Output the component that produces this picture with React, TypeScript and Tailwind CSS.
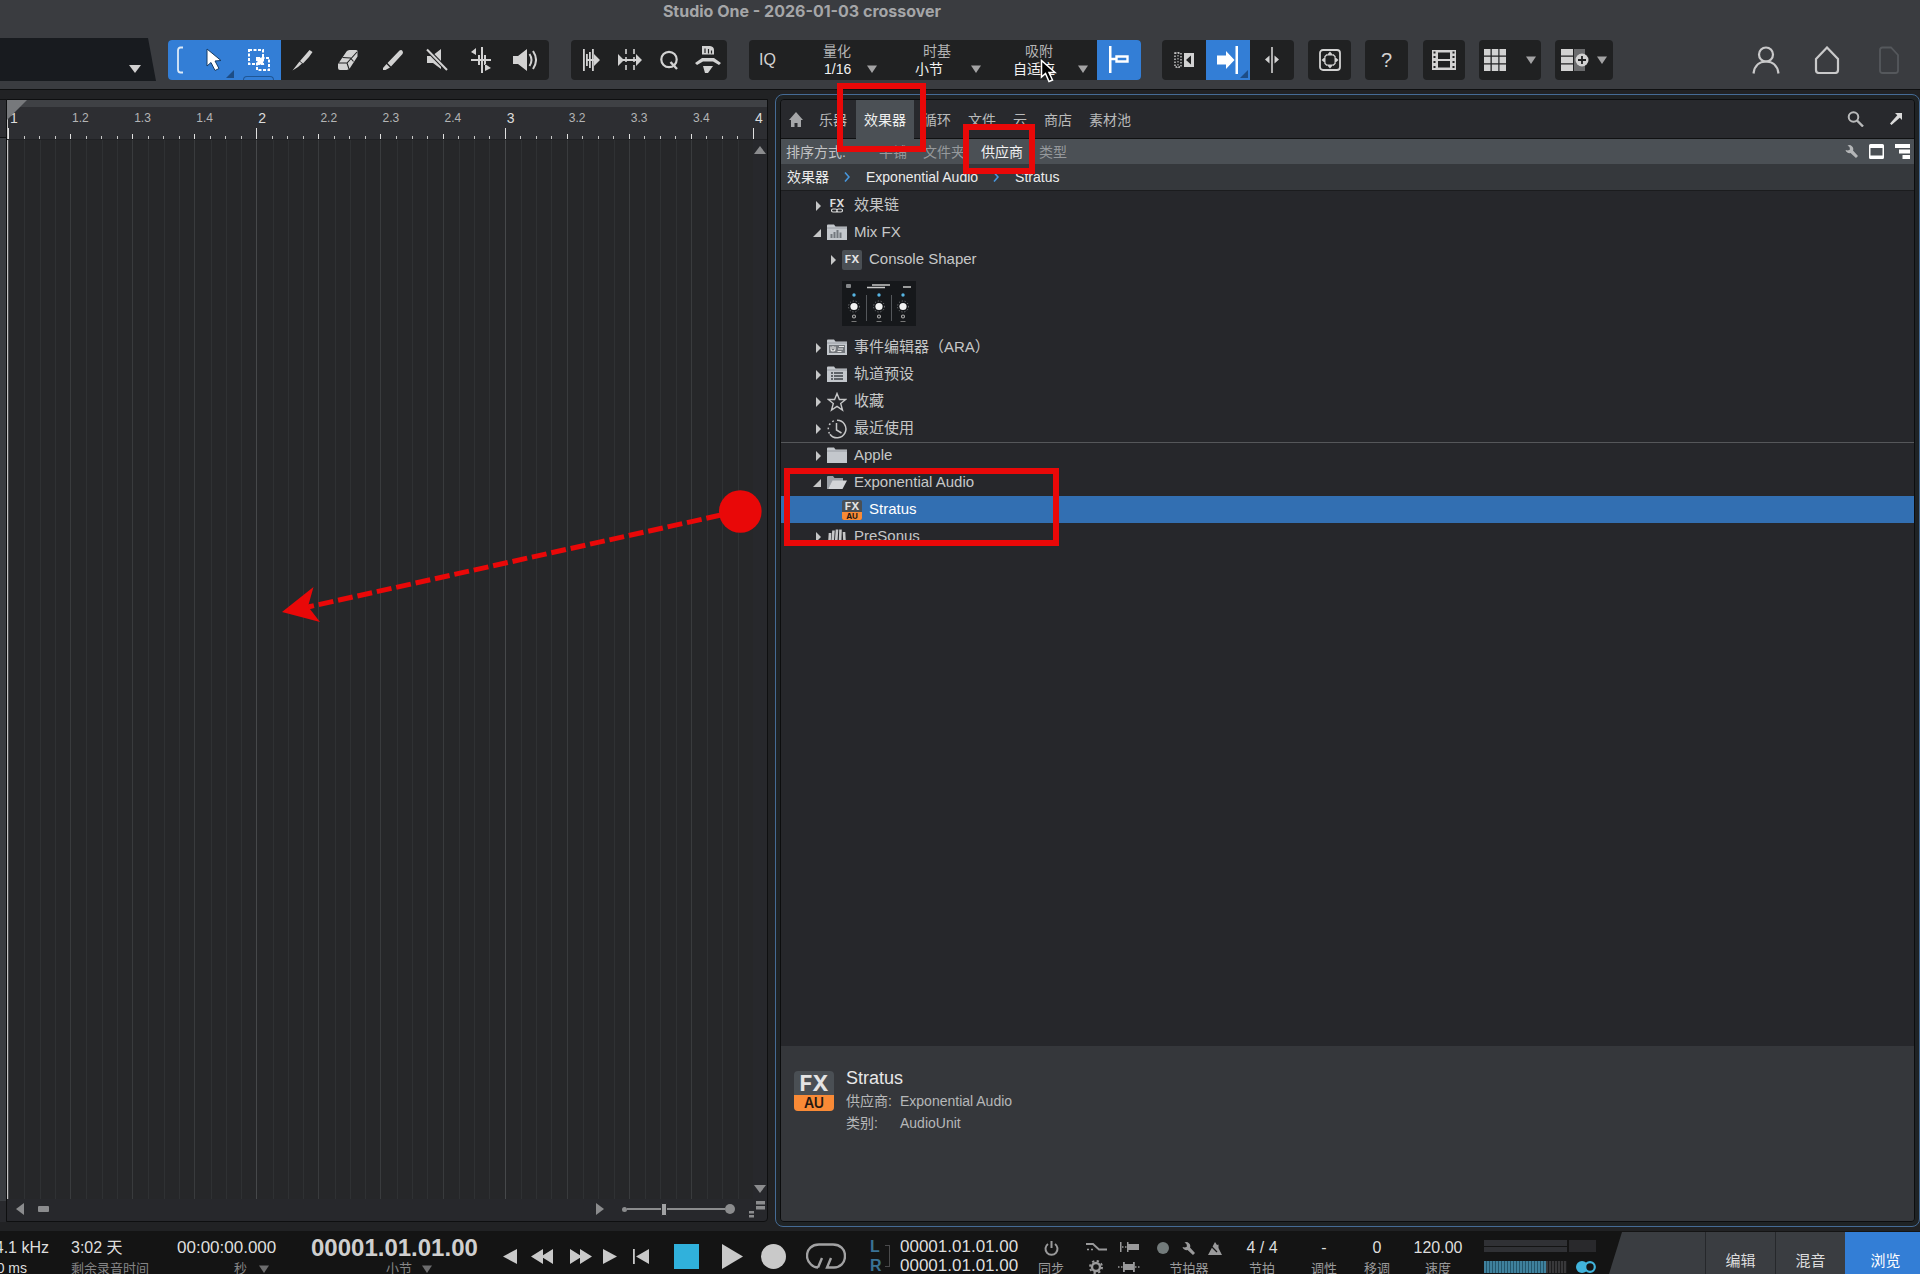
import React from "react";

type P = { className?: string; children?: React.ReactNode };

const Svg = ({ w, h, children, className = "" }: P & { w: number; h: number }) => (
  <svg width={w} height={h} viewBox={`0 0 ${w} ${h}`} className={`shrink-0 ${className}`} fill="currentColor" aria-hidden="true">
    {children}
  </svg>
);

const Down = ({ className = "text-[#a3a3a4]" }: P) => (
  <Svg w={10} h={8} className={className}>
    <path d="M0 0.5h10L5 8z" />
  </Svg>
);

const Group = ({ children, className = "" }: P) => (
  <div className={`flex h-10 shrink-0 overflow-hidden rounded bg-[#202122] text-[#d2d2d2] ${className}`}>{children}</div>
);

const Tool = ({ label, className = "w-11", children }: P & { label: string }) => (
  <button type="button" aria-label={label} className={`relative flex h-10 shrink-0 items-center justify-center ${className}`}>
    {children}
  </button>
);

const Corner = () => (
  <Svg w={8} h={8} className="absolute right-0.5 bottom-0.5 text-[#1d4d86]">
    <path d="M8 0v8H0z" />
  </Svg>
);

function Snap({ label, value, cell, labelPad, selectPad, arrow }: { label: string; value: string; cell: string; labelPad: string; selectPad: string; arrow: string }) {
  return (
    <label className={`relative block h-10 shrink-0 text-sm leading-[18px] ${cell}`}>
      <span className={`block pt-0.5 text-[#b4b4b5] ${labelPad}`}>{label}</span>
      <select defaultValue={value} className={`block h-[18px] w-full appearance-none bg-transparent text-[#f2f2f2] ${selectPad}`}>
        <option>{value}</option>
      </select>
      <Down className={`absolute bottom-[7px] ${arrow} text-[#a3a3a4]`} />
    </label>
  );
}

function Toolbar() {
  return (
    <div className="flex h-[59px] items-start pt-[10px]">
      <button type="button" aria-label="Parameter" className="relative -mt-[2px] h-[43px] w-[156px] shrink-0 bg-[#181b1f] [clip-path:polygon(0_0,148px_0,156px_100%,0_100%)]">
        <Svg w={12} h={8} className="absolute right-[15px] bottom-2 text-[#d0d0d0]">
          <path d="M0 0h12L6 8z" />
        </Svg>
      </button>

      <Group className="ml-3 pr-0.5">
        <div className="flex bg-[#337ed6] text-white">
          <span className="flex w-[23px] items-center justify-center">
            <Svg w={8} h={28} className="text-[#dceaf8]">
              <path d="M7 1.5H4.5Q2 1.500 2 4.500V23.500Q2 26.500 4.500 26.500H7" fill="none" stroke="currentColor" strokeWidth="1.800" />
            </Svg>
          </span>
          <Tool label="箭头工具" className="w-[45px]">
            <Svg w={16} h={24}>
              <path d="M1 1v17l4-3.500 4 8 4-2-4-7.500 6-.5z" stroke="#173c66" strokeWidth="1" />
            </Svg>
            <Corner />
          </Tool>
          <Tool label="范围工具" className="w-[45px]">
            <Svg w={24} h={24}>
              <rect x="2" y="2" width="14" height="14" fill="none" stroke="#fff" strokeWidth="2" strokeDasharray="3 1.500" />
              <rect x="10" y="10" width="12" height="12" fill="none" stroke="#fff" strokeWidth="2" strokeDasharray="3 1.500" />
              <path d="M9 9l3 1.500 2-1 2 2v3l1.500 2-3-.5-2 1-3-.5 1-3z" />
            </Svg>
            <span className="absolute bottom-0 h-1 w-[31px] rounded-t border border-b-0 border-[#1f5796]" />
          </Tool>
        </div>
        <Tool label="分割工具">
          <Svg w={24} h={24}>
            <path d="M15.500 5.500L18.500 2l3 2-3.500 5-6 6.500-3-2.500zM8.500 13.500l2.500 2L7 19l-5.500 3.500z" />
          </Svg>
        </Tool>
        <Tool label="橡皮工具" className="w-[45px]">
          <Svg w={24} h={24}>
            <path d="M10.500 3.500Q11.500 2 13.500 2h6.500q2 0 1.500 2v4.500L14 20q-1.500 2-3.500 2H4Q2 22 2 20v-4z" />
            <path d="M2.500 15h8.500L21 4M11 15l2 6M6.500 9.500l8 .5 3 3.500" fill="none" stroke="#202122" strokeWidth="1.100" />
          </Svg>
        </Tool>
        <Tool label="绘制工具" className="w-[45px]">
          <Svg w={24} h={24}>
            <path d="M18.500 2.500q2-1 3 .5t0 3L10 18.500 6.500 15zM5.500 16l3.500 3.500L4.500 22H2v-2z" />
          </Svg>
        </Tool>
        <Tool label="静音工具">
          <Svg w={24} h={24}>
            <path d="M2 8h5l9-7v20l-8-6H2z" />
            <path d="M2 1.500L22 22" stroke="#202122" strokeWidth="4" />
            <path d="M2 1.500L22 22" stroke="currentColor" strokeWidth="2" />
          </Svg>
        </Tool>
        <Tool label="弯曲工具">
          <Svg w={24} h={26}>
            <path d="M12 0h2v26h-2zM9 8h2v10H9zM15 8h2v10h-2zM2 12h20v2H2zM2 5l5-4v7zM22 21l-6-4v7z" />
          </Svg>
        </Tool>
        <Tool label="聆听工具">
          <Svg w={24} h={24}>
            <path d="M0 8h5l9-7v22l-9-7H0z" />
            <path d="M16.500 6q4 6 0 12M20 3q6 9 0 18" fill="none" stroke="currentColor" strokeWidth="2" />
          </Svg>
        </Tool>
      </Group>

      <Group className="ml-[22px]">
        <Tool label="瞬态检测" className="w-[39px]">
          <Svg w={18} h={24}>
            <path d="M1 1h1.800v22H1zM4 6h1.800v12H4zM7 4h1.800v16H7zM10 1h1.800v22H10zM4 11h10v2H4zM12 6l6 6-6 6z" />
          </Svg>
        </Tool>
        <Tool label="拉伸" className="w-[39px]">
          <Svg w={24} h={24}>
            <path d="M0 6l6 6-6 6zM18 6l6 6-6 6zM5 11h14v2H5z" />
            <path d="M8 1v22M16 1v22" stroke="currentColor" strokeWidth="1.600" strokeDasharray="5 3" />
          </Svg>
        </Tool>
        <Tool label="量化" className="w-[39px]">
          <Svg w={20} h={22}>
            <circle cx="10" cy="10.500" r="7.700" fill="none" stroke="currentColor" strokeWidth="2.200" />
            <path d="M11.500 13l6.500 7" stroke="currentColor" strokeWidth="2.400" />
          </Svg>
        </Tool>
        <Tool label="动作" className="w-[39px]">
          <Svg w={28} h={30}>
            <path d="M8 1h2v8.500H8zM8 1h8q4 .5 4 4v4.500H8z" />
            <path d="M11 3.500v4.500M14.500 4v4.500M17.500 5.500v3" stroke="#202122" strokeWidth="1.200" />
            <path d="M1 18L8 13h12l7 5-2 2-6-3.500H9L3 20z" />
            <path d="M9 21h10l-5 7h-3z" />
          </Svg>
        </Tool>
      </Group>

      <Group className="ml-[22px]">
        <button type="button" className="w-[50px] pl-2.5 text-left text-base">IQ</button>
        <Snap label="量化" value="1/16" cell="w-[92px]" labelPad="pl-6" selectPad="pl-[25px]" arrow="left-[68px]" />
        <Snap label="时基" value="小节" cell="w-[98px]" labelPad="pl-8" selectPad="pl-6" arrow="left-[80px]" />
        <Snap label="吸附" value="自适应" cell="w-[108px]" labelPad="pl-9" selectPad="pl-6" arrow="left-[89px]" />
        <Tool label="吸附" className="w-11 bg-[#337ed6]">
          <Svg w={22} h={28} className="text-white">
            <path d="M1 0h2.500v27H1z" />
            <path d="M3 13h5M8.500 10.500h11v5h-11z" fill="none" stroke="currentColor" strokeWidth="2.400" />
          </Svg>
        </Tool>
      </Group>

      <Group className="ml-[21px]">
        <Tool label="自动滚动">
          <Svg w={20} h={16}>
            <path d="M1 1h6v14H1z" fill="none" stroke="currentColor" strokeWidth="1.400" strokeDasharray="1.500 1.500" />
            <path d="M4 0v16" stroke="currentColor" strokeDasharray="1.500 1.500" />
            <path d="M10 1h10v14H10z" />
            <path d="M17 3.500v9L12 8z" fill="#202122" />
          </Svg>
        </Tool>
        <Tool label="光标跟随" className="w-11 bg-[#337ed6]">
          <Svg w={24} h={28} className="text-white">
            <path d="M1 9.500h9V5l8.500 9-8.500 9v-4.500H1z" />
            <path d="M19.500 0H22v28h-2.500z" />
          </Svg>
          <Corner />
        </Tool>
        <Tool label="居中">
          <Svg w={16} h={26}>
            <path d="M7.200 0h1.600v26H7.200zM5.500 8.500v8L1 12.500zM10.500 8.500v8l4.500-4z" />
          </Svg>
        </Tool>
      </Group>

      <Group className="ml-3.5">
        <Tool label="缩放" className="w-[43px]">
          <Svg w={22} h={22}>
            <rect x="1" y="1" width="20" height="20" rx="3" fill="none" stroke="currentColor" strokeWidth="1.800" />
            <path d="M11 2.500l3.500 4h-7zM11 19.500l-3.500-4h7zM2.500 11l4-3.500v7zM19.500 11l-4 3.500v-7z" />
            <path d="M8 5.500L5.500 8M14 5.500L16.500 8M8 16.500L5.500 14M14 16.500l2.500-2.500" stroke="currentColor" strokeWidth="1.200" />
          </Svg>
        </Tool>
      </Group>
      <Group className="ml-3.5">
        <button type="button" className="w-[43px] text-xl">?</button>
      </Group>
      <Group className="ml-[15px]">
        <Tool label="视频" className="w-[42px]">
          <Svg w={24} h={20}>
            <path d="M0 0h24v20H0z" />
            <path d="M6 2.500h12v6.500H6zM6 11h12v6.500H6zM1.500 1.500h2v2h-2zM1.500 6h2v2h-2zM1.500 11h2v2h-2zM1.500 16h2v2h-2zM20.500 1.500h2v2h-2zM20.500 6h2v2h-2zM20.500 11h2v2h-2zM20.500 16h2v2h-2z" fill="#202122" />
          </Svg>
        </Tool>
      </Group>
      <Group className="ml-3.5">
        <Tool label="视图" className="w-[62px]">
          <Svg w={22} h={22}>
            <path d="M0 0h6.500v6.500H0zM7.800 0h6.500v6.500H7.800zM15.500 0H22v6.500h-6.500zM0 7.800h6.500v6.500H0zM7.800 7.800h6.500v6.500H7.800zM15.500 7.800H22v6.500h-6.500zM0 15.500h6.500V22H0zM7.800 15.500h6.500V22H7.800zM15.500 15.500H22V22h-6.500z" />
          </Svg>
          <Down className="ml-5 text-[#a3a3a4]" />
        </Tool>
      </Group>
      <Group className="ml-3.5">
        <Tool label="添加" className="w-[58px]">
          <Svg w={28} h={22}>
            <path d="M13 0h11v22H13z" fill="#6a6b6d" />
            <path d="M0 0h12v6.500H0zM0 7.800h12v6.500H0zM0 15.500h12V22H0z" />
            <circle cx="21" cy="11" r="6.500" />
            <path d="M17 11h8M21 7v8" stroke="#202122" strokeWidth="1.800" />
          </Svg>
          <Down className="ml-2 text-[#a3a3a4]" />
        </Tool>
      </Group>

      <div className="ml-auto flex h-10 shrink-0 items-center gap-[34px] pr-5 text-[#c9c9ca]">
        <button type="button" aria-label="用户">
          <Svg w={28} h={28}>
            <circle cx="14" cy="8.500" r="7" fill="none" stroke="currentColor" strokeWidth="2.200" />
            <path d="M1.500 27.500C2.500 19 8 15.500 14 15.500S25.500 19 26.500 27.500" fill="none" stroke="currentColor" strokeWidth="2.200" />
          </Svg>
        </button>
        <button type="button" aria-label="主页">
          <Svg w={26} h={28}>
            <path d="M2 13L13 1.500 24 13v11q0 3-3 3H5q-3 0-3-3z" fill="none" stroke="currentColor" strokeWidth="2.200" />
          </Svg>
        </button>
        <button type="button" aria-label="项目" className="ml-1 text-[#55585c]">
          <Svg w={22} h={28}>
            <path d="M2 4q0-2.500 2.500-2.500H13L20 9v15.500q0 2.500-2.500 2.500h-13Q2 27 2 24.500z" fill="none" stroke="currentColor" strokeWidth="1.800" />
          </Svg>
        </button>
      </div>
    </div>
  );
}

const beats = [1, 2, 3].flatMap((bar) => [1, 2, 3, 4].map((beat) => ({ bar, beat })));

function Timeline() {
  return (
    <section className="flex w-2/5 shrink-0 pt-[9px] pb-[9px]">
      <div className="flex w-1.5 flex-col">
        <div className="h-[39px] border-y border-[#101112] bg-[#2d2e32]" />
        <div className="grow bg-[#3a3d41]" />
        <div className="h-[21px] bg-[#28292d]" />
      </div>
      <div className="flex min-w-0 grow flex-col overflow-hidden rounded-br border border-[#0e0f10] bg-[#27282c]">
        <div className="relative flex h-10 shrink-0 flex-col bg-[#2d2e32]">
          <div className="h-[7px] bg-[#3f4145]" />
          <div className="flex grow border-b border-[#202124]">
            <div className="grid grow grid-cols-12 border-l border-[#c4c4c4]">
              {beats.map(({ bar, beat }) => (
                <div key={`${bar}.${beat}`} className="relative flex items-end">
                  <span className={beat === 1 ? "absolute top-px left-0.5 text-sm leading-5 text-[#dcdcdc]" : "absolute top-px left-0.5 text-xs leading-5 text-[#b4b5b6]"}>
                    {beat === 1 ? bar : `${bar}.${beat}`}
                  </span>
                  <i className={beat === 1 ? "h-[11px] w-1/4 border-l border-[#e0e0e0]" : "h-[5px] w-1/4 border-l border-[#e0e0e0]"} />
                  <i className="h-[3px] w-1/4 border-l border-[#c8c8c8]" />
                  <i className="h-[3px] w-1/4 border-l border-[#c8c8c8]" />
                  <i className="h-[3px] w-1/4 border-l border-[#c8c8c8]" />
                </div>
              ))}
            </div>
            <div className="relative flex w-3.5 items-end text-sm leading-5 text-[#dcdcdc]">
              <span className="absolute top-px left-0.5">4</span>
              <i className="h-[11px] border-l border-[#e0e0e0]" />
            </div>
          </div>
          <Svg w={20} h={20} className="absolute top-0 left-0 text-[#77797c]">
            <path d="M0 0h20L0 20z" />
          </Svg>
        </div>
        <div className="flex grow">
          <div className="grid grow grid-cols-12 border-l border-[#c4c4c4] bg-[#262729]">
            {beats.map(({ bar, beat }) => (
              <div key={`${bar}.${beat}`} className={beat === 1 ? "grid grid-cols-4 border-l border-[#46484a]" : "grid grid-cols-4 border-l border-[#393b3d]"}>
                <i />
                <i className="border-l border-[#2f3133]" />
                <i className="border-l border-[#2f3133]" />
                <i className="border-l border-[#2f3133]" />
              </div>
            ))}
          </div>
          <div className="flex w-3.5 flex-col items-center justify-between py-1.5 text-[#8b8c8e]">
            <Svg w={12} h={8}><path d="M6 0l6 8H0z" /></Svg>
            <Svg w={12} h={8}><path d="M0 0h12L6 8z" /></Svg>
          </div>
        </div>
        <div className="flex h-[22px] shrink-0 items-center pb-0.5 pl-[9px] text-[#8b8c8e]">
          <Svg w={8} h={12}><path d="M8 0v12L0 6z" /></Svg>
          <span className="ml-3.5 h-1.5 w-[11px] rounded-[1px] bg-current" />
          <Svg w={8} h={12} className="ml-auto"><path d="M0 0v12l8-6z" /></Svg>
          <span className="ml-[18px] size-[5px] rounded-full bg-current" />
          <input
            type="range"
            aria-label="水平缩放"
            defaultValue={37}
            className="h-3.5 w-[98px] appearance-none bg-transparent bg-[linear-gradient(#8b8c8e,#8b8c8e)] bg-[length:100%_2px] bg-center bg-no-repeat [&::-webkit-slider-thumb]:h-[13px] [&::-webkit-slider-thumb]:w-1.5 [&::-webkit-slider-thumb]:appearance-none [&::-webkit-slider-thumb]:rounded-[1px] [&::-webkit-slider-thumb]:border [&::-webkit-slider-thumb]:border-[#27282c] [&::-webkit-slider-thumb]:bg-[#a0a1a3]"
          />
          <span className="size-2.5 rounded-full bg-current" />
          <Svg w={17} h={18} className="mr-0.5 ml-[13px]"><path d="M8 1h9v3.500H8zM8 6h9v3.500H8zM1 11h5v2.500H1zM1 15h5v2.500H1z" /></Svg>
        </div>
      </div>
    </section>
  );
}

const FolderIcon = ({ children }: P) => (
  <Svg w={20} h={17} className="text-[#c3c7cc]">
    <path d="M0 1.500Q0 .5 1 .5h6l1.500 2H20V16H0z" />
    <path d="M0 4h20" stroke="#8d939b" strokeWidth=".8" />
    {children}
  </Svg>
);

const FxAu = ({ big = false }: { big?: boolean }) =>
  big ? (
    <div className="flex h-10 w-10 shrink-0 flex-col overflow-hidden rounded bg-[#4a4f54] text-center font-['Inter',sans-serif] font-bold">
      <span className="h-6 text-[22px] leading-6 text-[#e4e4e4]">FX</span>
      <span className="grow bg-[#f98a36] text-sm leading-4 font-semibold text-[#241710]">AU</span>
    </div>
  ) : (
    <span className="flex h-5 w-5 shrink-0 flex-col overflow-hidden rounded-[2px] bg-[#4a4f54] text-center font-['Inter',sans-serif] font-bold">
      <span className="h-3 text-[11px] leading-3 text-[#e4e4e4]">FX</span>
      <span className="h-2 bg-[#f98a36] text-[8px] leading-2 text-[#241710]">AU</span>
    </span>
  );

function Row({ icon, text, open, leaf, nested, selected, cut }: { icon: React.ReactNode; text: string; open?: boolean; leaf?: boolean; nested?: boolean; selected?: boolean; cut?: boolean }) {
  return (
    <li className={cut ? "h-[17px] overflow-hidden" : ""}>
      <button
        type="button"
        className={`flex h-[27px] w-full items-center text-[15px] ${nested ? "pl-[47px]" : "pl-8"} ${selected ? "bg-[#326fb2] text-white" : "text-[#c6c7c8]"}`}
      >
        <span className="flex w-3.5 shrink-0">
          {leaf ? null : open ? (
            <Svg w={8} h={8}><path d="M8 0v8H0z" /></Svg>
          ) : (
            <Svg w={8} h={10} className="ml-0.5"><path d="M1 0l5 5-5 5z" /></Svg>
          )}
        </span>
        <span className="flex w-5 shrink-0 justify-center">{icon}</span>
        <span className="ml-[7px]">{text}</span>
      </button>
    </li>
  );
}

const Knob = ({ x }: { x: number }) => (
  <g>
    <circle cx={x} cy="14" r="1.700" fill="#56b4e2" />
    <circle cx={x} cy="25.500" r="5.500" fill="none" stroke="#8b8d90" strokeWidth=".9" strokeDasharray="1 2" />
    <circle cx={x} cy="25.500" r="3.600" fill="#f2f2f2" />
    <circle cx={x} cy="35.500" r="1.500" fill="none" stroke="#aaa" strokeWidth="1.100" />
    <path d={`M${x - 2.500} 40.500h5`} stroke="#777" />
  </g>
);

const Wrench = () => (
  <Svg w={13} h={13}>
    <path d="M2.500 .5A4 4 0 0 1 8 5.500L13 11l-2 2-5.500-5A4 4 0 0 1 .5 5L3 5.500 5 4.500 4.500 2z" />
  </Svg>
);

const Crumb = () => (
  <Svg w={6} h={10} className="mr-4 ml-[15px] text-[#4796dc]">
    <path d="M1 .5L5 5 1 9.500" fill="none" stroke="currentColor" strokeWidth="1.600" />
  </Svg>
);

function Browser() {
  const tabs = ["乐器", "效果器", "循环", "文件", "云", "商店", "素材池"];
  return (
    <section className="mt-1 mb-1 ml-[7px] flex min-w-0 grow rounded-lg border border-[#456b95] bg-[#1f2325] p-1">
      <div className="flex min-w-0 grow flex-col overflow-hidden rounded border border-[#0c0d0e] bg-[#26272b]">
        <nav className="flex h-[39px] shrink-0 border-b border-[#101112] bg-[#28292d] text-sm text-[#b9babb]">
          <button type="button" aria-label="主页" className="w-[30px] pl-2 text-[#a5a6a8]">
            <Svg w={14} h={15}><path d="M7 0l7 8h-2v7H8.500v-4h-3v4H2V8H0z" /></Svg>
          </button>
          <div className="flex gap-px">
            {tabs.map((t) => (
              <button key={t} type="button" className={t === "效果器" ? "mb-[-1px] bg-[#4b5055] px-2 pt-px text-[#f0f0f0]" : "px-2 pt-px"}>
                {t}
              </button>
            ))}
          </div>
          <div className="ml-auto flex items-center gap-[26px] pr-3">
            <button type="button" aria-label="搜索">
              <Svg w={17} h={16}>
                <circle cx="6.500" cy="6" r="4.800" fill="none" stroke="currentColor" strokeWidth="2" />
                <path d="M10 9.500l6 6" stroke="currentColor" strokeWidth="2.400" />
              </Svg>
            </button>
            <button type="button" aria-label="分离">
              <Svg w={12} h={12} className="text-[#dadada]">
                <path d="M5 0h7v7L9.800 4.700 1.500 12 0 10.500 7.300 2.300z" />
              </Svg>
            </button>
          </div>
        </nav>

        <div className="flex h-[25px] shrink-0 items-center bg-[#4b5055] text-sm text-[#96999c]">
          <span className="w-[98px] pl-[5px] text-[#c3c4c6]">排序方式:</span>
          <div className="flex gap-4">
            <button type="button">平铺</button>
            <button type="button">文件夹</button>
            <button type="button" className="text-[#f2f2f2]">供应商</button>
            <button type="button">类型</button>
          </div>
          <div className="ml-auto flex items-center gap-[11px] pr-1 text-white">
            <button type="button" aria-label="设置" className="text-[#b4b6b8]">
              <Wrench />
            </button>
            <button type="button" aria-label="信息">
              <Svg w={15} h={15}><path d="M1.500 0h12Q15 0 15 1.500v12q0 1.500-1.500 1.500h-12Q0 15 0 13.500v-12Q0 0 1.500 0zM1.500 4v7.500h12V4z" fillRule="evenodd" /></Svg>
            </button>
            <button type="button" aria-label="树形">
              <Svg w={15} h={15}><path d="M0 0h15v4H0zM4 5.500h11v4H4zM7.500 11H15v4H7.500z" /></Svg>
            </button>
          </div>
        </div>

        <div className="flex h-[27px] shrink-0 items-center border-b border-[#1b1c1e] bg-[#35383c] pl-1.5 text-sm text-[#ececec]">
          <a href="#fx">效果器</a>
          <Crumb />
          <a href="#vendor">Exponential Audio</a>
          <Crumb />
          <a href="#stratus">Stratus</a>
        </div>

        <div className="min-h-0 grow overflow-hidden">
          <ul className="border-b border-[#55575a] pt-px">
            <Row
              text="效果链"
              icon={
                <span className="flex flex-col items-center font-['Inter',sans-serif] text-[11px] leading-[10px] font-bold text-[#dcdcdc]">
                  FX
                  <Svg w={14} h={5}><path d="M3 1h2.500a1.500 1.500 0 0 1 0 3H3a1.500 1.500 0 0 1 0-3zM8.500 1H11a1.500 1.500 0 0 1 0 3H8.500a1.500 1.500 0 0 1 0-3z" fill="none" stroke="currentColor" strokeWidth="1.200" /></Svg>
                </span>
              }
            />
            <Row open text="Mix FX" icon={<FolderIcon><path d="M4.500 14v-4M7.500 14V8M10.500 14V6M13.500 14V8.500" stroke="#73787e" strokeWidth="2" /></FolderIcon>} />
            <Row nested text="Console Shaper" icon={<span className="flex h-5 w-5 items-center justify-center rounded-[2px] bg-[#4a4f54] font-['Inter',sans-serif] text-[11px] font-bold text-[#e4e4e4]">FX</span>} />
            <li className="flex h-[61px] items-center pl-[61px]">
              <Svg w={74} h={45}>
                <rect width="74" height="45" fill="#16181b" />
                <rect x="4" y="3" width="5" height="4" rx="1" fill="#85878a" />
                <path d="M25 6.500h18M30 4h18M61 6h8" stroke="#c8c8c8" strokeWidth="1.500" />
                <path d="M24.500 14v26M49.500 14v26" stroke="#54575b" />
                <Knob x={12} />
                <Knob x={37} />
                <Knob x={61} />
              </Svg>
            </li>
            <Row
              text="事件编辑器（ARA）"
              icon={
                <FolderIcon>
                  <path d="M2 6h16v8H2z" fill="#73777c" />
                  <path d="M4 7.500v2.500q0 2 2 2t2-2V7.500M6 7v3M12 7.500h5M11 10h5M10.500 12.500h4" fill="none" stroke="#e8e8e8" strokeWidth="1.200" />
                </FolderIcon>
              }
            />
            <Row text="轨道预设" icon={<FolderIcon><path d="M4 6h2v2H4zM7 6h9v2H7zM4 9h2v2H4zM7 9h9v2H7zM4 12h2v2H4zM7 12h9v2H7z" fill="#5d6268" /></FolderIcon>} />
            <Row text="收藏" icon={<Svg w={20} h={20}><path d="M10 1.500l2.400 6h6.300l-5 4 1.800 6.500L10 14.300 4.500 18l1.800-6.500-5-4h6.300z" fill="none" stroke="currentColor" strokeWidth="1.400" /></Svg>} />
            <Row
              text="最近使用"
              icon={
                <Svg w={20} h={20}>
                  <path d="M10 1.200a8.800 8.800 0 1 1-7 14" fill="none" stroke="currentColor" strokeWidth="1.500" />
                  <path d="M2.500 14.500A8.800 8.800 0 0 1 9 1.300" fill="none" stroke="currentColor" strokeWidth="1.500" strokeDasharray="1.800 2.600" />
                  <path d="M9.500 4v7l5 3" fill="none" stroke="currentColor" strokeWidth="1.500" />
                </Svg>
              }
            />
          </ul>
          <ul className="-mt-px">
            <Row text="Apple" icon={<FolderIcon />} />
            <Row
              open
              text="Exponential Audio"
              icon={
                <Svg w={20} h={14} className="text-[#d3d5d8]">
                  <path d="M0 1q0-1 1-1h5l1.500 2H16v3H6L1 13H0z" fill="#9ba0a7" />
                  <path d="M5.500 4.500H20L15.500 13H1z" />
                </Svg>
              }
            />
            <Row leaf nested selected text="Stratus" icon={<FxAu />} />
            <Row
              cut
              text="PreSonus"
              icon={<Svg w={18} h={15}><path d="M2 4L1.500 12M5.500 1.500L4.500 14M9 .5L8 15M12.500 .5L12 15M16 3l.500 9" fill="none" stroke="currentColor" strokeWidth="2.600" /></Svg>}
            />
          </ul>
        </div>

        <div className="flex h-[175px] shrink-0 items-start bg-[#35373b] pt-[25px] pl-[13px] text-sm text-[#b6b7b9]">
          <FxAu big />
          <div className="ml-3">
            <h2 className="-mt-[5px] text-lg leading-6 font-light text-[#e8e8e8]">Stratus</h2>
            <dl className="grid grid-cols-[54px_auto] leading-[22px]">
              <dt>供应商:</dt>
              <dd>Exponential Audio</dd>
              <dt>类别:</dt>
              <dd>AudioUnit</dd>
            </dl>
          </div>
        </div>
      </div>
    </section>
  );
}

const Stat = ({ top, bottom, className }: { top: React.ReactNode; bottom: string; className: string }) => (
  <div className={`flex shrink-0 flex-col items-center ${className}`}>
    <span className="flex h-5 shrink-0 items-center text-base leading-5 whitespace-nowrap text-[#dedede]">{top}</span>
    <span className="shrink-0 text-[13px] leading-[22px] whitespace-nowrap text-[#9a9a9b]">{bottom}</span>
  </div>
);

function Transport() {
  return (
    <footer className="flex h-[43px] shrink-0 overflow-hidden bg-[#141414] text-[#c9c9c9]">
      <div className="flex shrink-0 pt-[7px]">
        <div className="flex w-[49px] flex-col items-end overflow-hidden text-base leading-5 whitespace-nowrap text-[#dedede]">
          <span>44.1 kHz</span>
          <span className="pr-[22px] text-sm leading-5">6.0 ms</span>
        </div>
        <div className="ml-[22px] w-[106px]">
          <div className="text-base leading-5 text-[#dedede]">3:02 天</div>
          <div className="text-[13px] leading-[22px] text-[#858586]">剩余录音时间</div>
        </div>
        <div className="w-[134px]">
          <div className="text-[17px] leading-5 text-[#dedede]">00:00:00.000</div>
          <button type="button" className="flex items-center gap-3 pl-[57px] text-[13px] leading-[22px] text-[#858586]">
            秒<Down className="text-[#6d6d6e]" />
          </button>
        </div>
        <div className="w-[192px]">
          <div className="text-2xl leading-5 font-bold text-[#cfcfcf]">00001.01.01.00</div>
          <button type="button" className="flex items-center gap-2.5 pl-[75px] text-[13px] leading-[22px] text-[#858586]">
            小节<Down className="text-[#6d6d6e]" />
          </button>
        </div>
      </div>

      <div className="flex h-[50px] shrink-0 items-center">
        <button type="button" aria-label="后退"><Svg w={14} h={15}><path d="M14 0v15L0 7.500z" /></Svg></button>
        <button type="button" aria-label="快退" className="ml-3.5"><Svg w={22} h={15}><path d="M12 0v15L0 7.500zM22 0v15L10 7.500z" /></Svg></button>
        <button type="button" aria-label="快进" className="ml-[17px]"><Svg w={22} h={15}><path d="M0 0v15l12-7.500zM10 0v15l12-7.500z" /></Svg></button>
        <button type="button" aria-label="前进" className="ml-[11px]"><Svg w={14} h={15}><path d="M0 0v15l14-7.500z" /></Svg></button>
        <button type="button" aria-label="回到开头" className="ml-4"><Svg w={16} h={15}><path d="M0 0h1.800v15H0zM16 0v15L3 7.500z" /></Svg></button>
        <button type="button" aria-label="停止" className="ml-[25px] size-[25px] bg-[#30b1dc]" />
        <button type="button" aria-label="播放" className="ml-[23px]"><Svg w={21} h={25}><path d="M0 0v25l21-12.500z" /></Svg></button>
        <button type="button" aria-label="录音" className="ml-[18px] size-[25px] rounded-full bg-[#c9c9c9]" />
        <button type="button" aria-label="循环" className="ml-5">
          <Svg w={40} h={26} className="text-[#a2a2a3]">
            <path d="M12 24.500q-4 0-7-3-4-4-4-8.500C1 6 6 1.500 13 1.500h14C34 1.500 39 6 39 13c0 7-5 11.500-11 11.500h-7L25 15M12 24.500L16 15" fill="none" stroke="currentColor" strokeWidth="2.400" />
          </Svg>
        </button>
      </div>

      <div className="ml-6 flex shrink-0 pt-1.5 text-[17px] leading-[19px]">
        <div className="w-[15px] text-base leading-[19px] font-semibold text-[#3a7295]">
          <div>L</div>
          <div>R</div>
        </div>
        <span className="mt-2 h-[22px] w-[5px] border border-l-0 border-[#4a4a4b]" />
        <div className="ml-2.5 w-[121px] text-[#dedede]">
          <div>00001.01.01.00</div>
          <div>00001.01.01.00</div>
        </div>
      </div>

      <div className="flex shrink-0 pt-[7px] text-[#9a9a9b]">
        <Stat
          className="ml-4 w-7"
          bottom="同步"
          top={<Svg w={15} h={15} className="text-[#9a9a9b]"><path d="M4 3a6 6 0 1 0 7 0M7.500 0v7" fill="none" stroke="currentColor" strokeWidth="2" /></Svg>}
        />
        <div className="ml-5 flex w-[22px] flex-col items-center">
          <span className="flex h-[18px] shrink-0 items-center">
            <Svg w={21} h={8}><path d="M0 1h7l6 5.500h8" fill="none" stroke="currentColor" strokeWidth="1.800" /><path d="M1 6.500h8" stroke="currentColor" strokeWidth="1.600" strokeDasharray="2 2" /></Svg>
          </span>
          <Svg w={14} h={14} className="mt-1">
            <circle cx="7" cy="7" r="4" fill="none" stroke="currentColor" strokeWidth="2.400" />
            <circle cx="7" cy="7" r="6" fill="none" stroke="currentColor" strokeWidth="2" strokeDasharray="2.300 2.410" />
          </Svg>
        </div>
        <div className="ml-[11px] flex w-[22px] flex-col items-center">
          <span className="flex h-[18px] shrink-0 items-center">
            <Svg w={19} h={10}><path d="M0 0h1.500v10H0zM7 0h1.500v10H7zM8 2h11v6H8z" /><path d="M2 5h5" stroke="currentColor" strokeWidth="1.400" strokeDasharray="1.500 1.500" /></Svg>
          </span>
          <Svg w={22} h={10} className="mt-1.5"><path d="M5 0h1.800v10H5zM15 0h1.800v10H15zM6 2h10v6H6z" /><path d="M0 5h5M17 5h5" stroke="currentColor" strokeWidth="1.400" strokeDasharray="1.500 1.500" /></Svg>
        </div>
        <Stat
          className="ml-[17px] w-[64px]"
          bottom="节拍器"
          top={
            <span className="flex items-center gap-[13px] text-[#9a9a9b]">
              <span className="size-3 rounded-full bg-[#737b7b]" />
              <Wrench />
              <Svg w={14} h={13}><path d="M7 0l2 3 1.500-.5V6L14 13H0z" /><path d="M2 3l7 7" stroke="#141414" strokeWidth="1.300" /></Svg>
            </span>
          }
        />
        <Stat className="ml-[21px] w-10" top="4 / 4" bottom="节拍" />
        <Stat className="ml-[22px] w-10" top="-" bottom="调性" />
        <Stat className="ml-[13px] w-10" top="0" bottom="移调" />
        <Stat className="ml-[15px] w-[52px]" top="120.00" bottom="速度" />
      </div>

      <div className="ml-5 w-[112px] shrink-0 pt-[9px]">
        <div className="flex h-3 gap-0.5">
          <div className="flex w-[83px] flex-col gap-px">
            <i className="grow bg-[#303135]" />
            <i className="grow bg-[#303135]" />
          </div>
          <i className="grow bg-[#29292c]" />
        </div>
        <div className="mt-[9px] flex h-3">
          <i className="w-[62px] bg-[repeating-linear-gradient(90deg,#3f819d_0_2px,#24566b_2px_3px)]" />
          <i className="w-[21px] bg-[repeating-linear-gradient(90deg,#38383a_0_2px,#1c1c1d_2px_3px)]" />
          <Svg w={20} h={12} className="ml-auto text-[#41b4dc]">
            <circle cx="6" cy="6" r="6" />
            <circle cx="14" cy="6" r="4.800" fill="#141414" stroke="currentColor" strokeWidth="2.200" />
          </Svg>
        </div>
      </div>

      <div className="mt-px ml-[13px] flex grow bg-[#3a3d41] text-[15px] text-[#dcdcdd] [clip-path:polygon(13px_0,100%_0,100%_100%,0_100%)]">
        <button type="button" className="ml-auto h-[58px] w-[70px] shrink-0 border-l border-[#26282b]">编辑</button>
        <button type="button" className="h-[58px] w-[70px] shrink-0 border-l border-[#26282b]">混音</button>
        <button type="button" className="h-[58px] w-[75px] shrink-0 bg-[#337ed6] pl-1.5 text-white">浏览</button>
      </div>
    </footer>
  );
}

function Annotations() {
  return (
    <div className="pointer-events-none absolute inset-0">
      <div className="absolute top-[83px] left-[837px] h-[69px] w-[89px] border-6 border-[#e90808]" />
      <div className="absolute top-[124px] left-[963px] h-[50px] w-[72px] border-6 border-[#e90808]" />
      <div className="absolute top-[468px] left-[784px] h-[78px] w-[275px] border-6 border-[#e90808]" />
      <svg className="absolute top-[480px] left-[270px]" width="500" height="150" viewBox="0 0 500 150" fill="#e90808" aria-hidden="true">
        <path d="M451 35L38 127" stroke="#e90808" strokeWidth="5" strokeDasharray="15 4.860" />
        <circle cx="470.300" cy="31.500" r="21.300" />
        <path d="M12 132L43.500 107 38 126.500l12 15.500z" />
      </svg>
      <svg className="absolute top-[59px] left-[1040px]" width="17" height="24" viewBox="0 0 17 24" aria-hidden="true">
        <path d="M1.500 1.500v16.500l4-3.500 3.500 8 3.500-1.500-3.500-7.500h6z" fill="#000" stroke="#fff" strokeWidth="1.500" />
      </svg>
    </div>
  );
}

export default function App() {
  return (
    <div className="relative flex h-screen flex-col overflow-hidden bg-[#212224] font-['Liberation_Sans','Noto_Sans_CJK_SC',sans-serif]">
      <header className="shrink-0 border-b border-[#0f1011] bg-[#3a3c40]">
        <h1 className="h-[30px] pr-[316px] text-center font-['Inter',sans-serif] text-base leading-[22px] font-bold text-[#a5a6a8]">Studio One - 2026-01-03 crossover</h1>
        <Toolbar />
      </header>
      <main className="flex min-h-0 grow">
        <Timeline />
        <Browser />
      </main>
      <Transport />
      <Annotations />
    </div>
  );
}
